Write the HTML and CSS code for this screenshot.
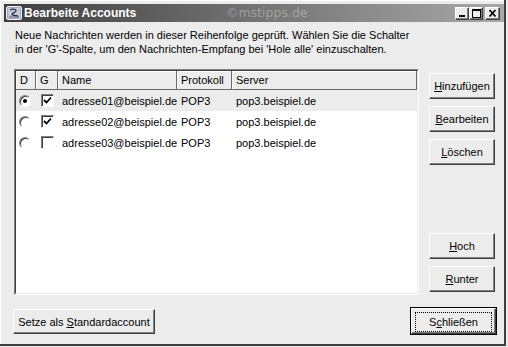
FILE: index.html
```html
<!DOCTYPE html>
<html lang="de">
<head>
    <meta charset="UTF-8">
    <title>Bearbeite Accounts</title>
    <link rel="stylesheet" href="styles.css">
</head>
<body>
    <div class="window">
        <div class="titlebar">
            <svg class="app-icon" width="16" height="16" viewBox="0 0 16 16">
                <rect x="0.5" y="1.5" width="15" height="13" rx="1.5" fill="#a4aabc" stroke="#eef0f4"/>
                <rect x="2" y="3" width="12" height="10" fill="#c4c9d6"/>
                <path d="M4 5 C8 3 12 5 9 7 C6 9 3 10 12 11" fill="none" stroke="#2a3048" stroke-width="1.3"/>
                <path d="M3 12 L13 12" stroke="#5a6078" stroke-width="1"/>
            </svg>
            <span class="title">Bearbeite Accounts</span>
            <span class="watermark">©mstipps.de</span>
            <div class="caption-buttons">
                <span class="cap-btn">
                    <svg width="12" height="11" viewBox="0 0 12 11"><rect x="3" y="7" width="6" height="2" fill="#000"/></svg>
                </span>
                <span class="cap-btn">
                    <svg width="12" height="11" viewBox="0 0 12 11"><rect x="2.5" y="1.5" width="8" height="8" fill="none" stroke="#000"/><rect x="2" y="1" width="9" height="2" fill="#000"/></svg>
                </span>
                <span class="cap-btn close">
                    <svg width="13" height="11" viewBox="0 0 13 11"><path d="M3.5 2 L9.5 8.5 M9.5 2 L3.5 8.5" stroke="#000" stroke-width="1.8"/></svg>
                </span>
            </div>
        </div>

        <p class="intro">Neue Nachrichten werden in dieser Reihenfolge geprüft. Wählen Sie die Schalter<br>in der 'G'-Spalte, um den Nachrichten-Empfang bei 'Hole alle' einzuschalten.</p>

        <div class="main">
            <div class="list">
                <div class="list-inner">
                    <div class="row header">
                        <div class="hcell">D</div>
                        <div class="hcell">G</div>
                        <div class="hcell">Name</div>
                        <div class="hcell">Protokoll</div>
                        <div class="hcell">Server</div>
                    </div>
                    <div class="row selected">
                        <div class="cell"><span class="radio checked"></span></div>
                        <div class="cell"><span class="check"><svg width="11" height="11" viewBox="0 0 11 11"><polyline points="2,5 4.5,7.5 9,2.5" fill="none" stroke="#000" stroke-width="1.8"/></svg></span></div>
                        <div class="cell text">adresse01@beispiel.de</div>
                        <div class="cell text">POP3</div>
                        <div class="cell text">pop3.beispiel.de</div>
                    </div>
                    <div class="row">
                        <div class="cell"><span class="radio"></span></div>
                        <div class="cell"><span class="check"><svg width="11" height="11" viewBox="0 0 11 11"><polyline points="2,5 4.5,7.5 9,2.5" fill="none" stroke="#000" stroke-width="1.8"/></svg></span></div>
                        <div class="cell text">adresse02@beispiel.de</div>
                        <div class="cell text">POP3</div>
                        <div class="cell text">pop3.beispiel.de</div>
                    </div>
                    <div class="row">
                        <div class="cell"><span class="radio"></span></div>
                        <div class="cell"><span class="check"></span></div>
                        <div class="cell text">adresse03@beispiel.de</div>
                        <div class="cell text">POP3</div>
                        <div class="cell text">pop3.beispiel.de</div>
                    </div>
                </div>
            </div>

            <div class="side">
                <button class="btn"><u>H</u>inzufügen</button>
                <button class="btn"><u>B</u>earbeiten</button>
                <button class="btn"><u>L</u>öschen</button>
                <button class="btn move-first"><u>H</u>och</button>
                <button class="btn"><u>R</u>unter</button>
            </div>
        </div>

        <div class="footer">
            <button class="btn wide">Setze als <u>S</u>tandardaccount</button>
            <button class="btn default"><span class="focus">S<u>c</u>hließen</span></button>
        </div>
    </div>
</body>
</html>
```

FILE: styles.css
```css
body {
    margin: 0;
    background-color: #ececec;
    font-family: "Liberation Sans", Arial, sans-serif;
    font-size: 11px;
    color: #000;
}
.window {
    position: relative;
    width: 504px;
    height: 344px;
    background: #ececec;
    border-right: 2px solid #404040;
    border-bottom: 2px solid #404040;
    box-shadow: inset 1px 1px #fff;
}
.titlebar {
    position: relative;
    display: flex;
    align-items: center;
    margin: 0 0 0 4px;
    top: 4px;
    width: 500px;
    height: 18px;
    background: linear-gradient(to right, #3e3e3e, #a8a8a8);
}
.app-icon {
    margin-left: 2px;
}
.title {
    margin-left: 2px;
    color: #fff;
    font-weight: bold;
    font-size: 12px;
}
.watermark {
    position: absolute;
    left: 222px;
    top: 0;
    line-height: 18px;
    font-family: "DejaVu Sans", sans-serif;
    font-size: 12.5px;
    color: rgba(255,255,255,0.32);
}
.caption-buttons {
    display: flex;
    margin-left: auto;
    margin-right: 4px;
}
.cap-btn {
    display: flex;
    align-items: center;
    justify-content: center;
    width: 12px;
    height: 11px;
    background: #ececec;
    border: 1px solid;
    border-color: #fff #404040 #404040 #fff;
    box-shadow: inset -1px -1px #808080;
}
.cap-btn.close {
    width: 13px;
    margin-left: 2px;
}
.intro {
    margin: 10px 0 0 15px;
    line-height: 14px;
}
.main {
    display: flex;
    margin-top: 13px;
    padding-left: 14px;
}
.list {
    width: 403px;
    height: 224px;
    border: 1px solid;
    border-color: #808080 #fff #fff #808080;
}
.list-inner {
    height: 222px;
    background: #fff;
    border: 1px solid;
    border-color: #404040 #ececec #ececec #404040;
}
.row {
    display: grid;
    grid-template-columns: 20px 22px 119px 55px 1fr;
    height: 21px;
    align-items: center;
}
.row.header {
    height: 19px;
}
.row.selected {
    background: #ececec;
}
.hcell {
    height: 19px;
    line-height: 18px;
    padding-left: 4px;
    background: #ececec;
    border-right: 1px solid #6a6a6a;
    border-bottom: 1px solid #6a6a6a;
    box-shadow: inset 1px 1px #fff;
    box-sizing: border-box;
}
.cell.text {
    padding-left: 4px;
    white-space: nowrap;
}
.radio {
    position: relative;
    display: block;
    width: 10px;
    height: 10px;
    margin-left: 3px;
    background: #fff;
    border: 1px solid;
    border-color: #808080 #fff #fff #808080;
    border-radius: 50%;
    box-shadow: inset 1px 1px #404040;
}
.radio.checked::after {
    content: "";
    position: absolute;
    left: 3px;
    top: 3px;
    width: 4px;
    height: 4px;
    border-radius: 50%;
    background: #000;
}
.check {
    display: flex;
    width: 11px;
    height: 11px;
    margin-left: 5px;
    background: #fff;
    border: 1px solid;
    border-color: #808080 #fff #fff #808080;
    box-shadow: inset 1px 1px #404040;
}
.side {
    display: flex;
    flex-direction: column;
    gap: 7px;
    margin-left: 10px;
    padding-top: 4px;
}
.btn {
    width: 66px;
    height: 26px;
    padding: 0;
    font-family: "Liberation Sans", Arial, sans-serif;
    font-size: 11px;
    color: #000;
    background: #ececec;
    border: 1px solid;
    border-color: #fff #404040 #404040 #fff;
    box-shadow: inset -1px -1px #808080;
}
.move-first {
    margin-top: 61px;
}
.footer {
    display: flex;
    justify-content: space-between;
    align-items: flex-start;
    margin-top: 13px;
    padding: 0 8px 0 13px;
}
.btn.wide {
    width: 142px;
    height: 25px;
    margin-top: 1px;
}
.btn.default {
    width: 85px;
    height: 26px;
    padding: 3px;
    outline: 1px solid #000;
    outline-offset: 0;
    border-color: #fff #404040 #404040 #fff;
}
.focus {
    display: block;
    height: 18px;
    line-height: 18px;
    border: 1px dotted #000;
}
```
